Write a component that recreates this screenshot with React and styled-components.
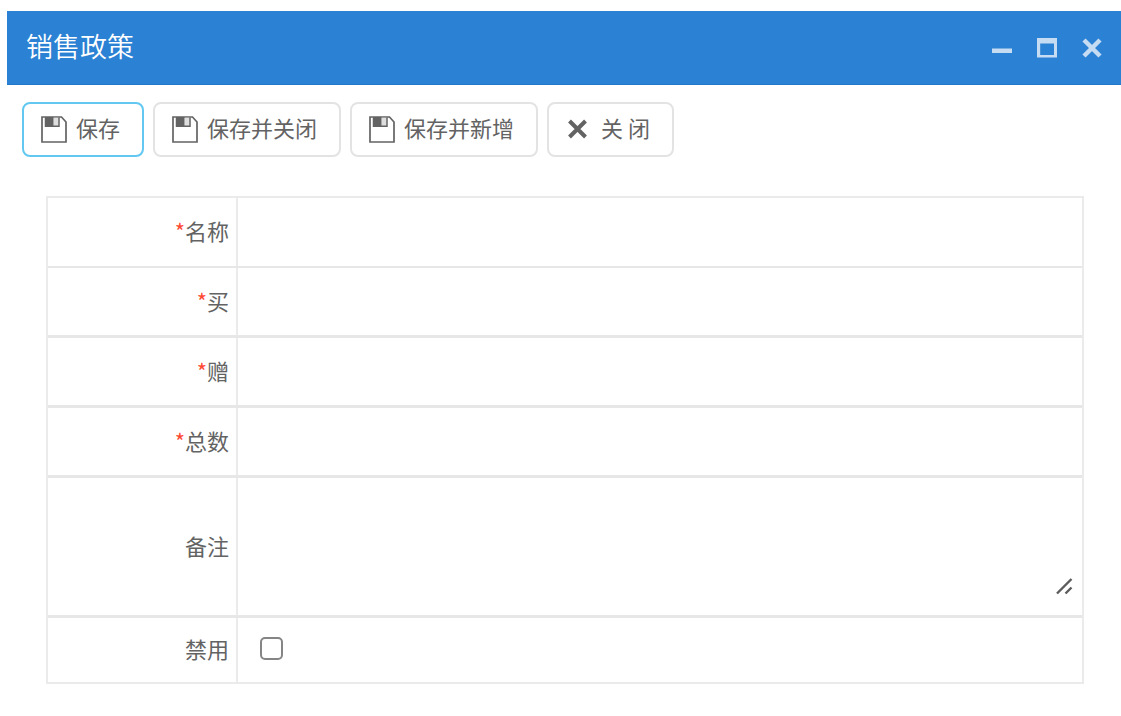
import React from "react";
import styled, { createGlobalStyle } from "styled-components";

const GlobalStyle = createGlobalStyle`
  * { box-sizing: border-box; }
  body {
    margin: 0;
    background: #fff;
    color: #636363;
    font-family: "Noto Sans CJK SC", sans-serif;
    font-size: 22px;
    line-height: 32px;
  }
`;

const Window = styled.main`
  margin: 11px 0 32px 7px;
`;

const TitleBar = styled.header`
  display: flex;
  align-items: center;
  justify-content: space-between;
  min-height: 74px;
  padding: 0 19px;
  background: #2b81d3;
  border-bottom: 1px solid #2478ca;
`;

const Title = styled.h1`
  margin: 0;
  padding-bottom: 4px;
  color: #fff;
  font-size: 27px;
  font-weight: 350;
  line-height: 40px;
`;

const WindowControls = styled.div`
  display: flex;
  gap: 25px;
`;

const ControlButton = styled.button`
  display: flex;
  width: 20px;
  height: 20px;
  padding: 0;
  border: 0;
  background: none;
  color: #c6dcf3;
  cursor: pointer;
`;

const Toolbar = styled.div`
  display: flex;
  flex-wrap: wrap;
  gap: 9px;
  padding: 17px 15px 0;
`;

const ToolButton = styled.button`
  display: flex;
  align-items: center;
  gap: 9px;
  height: 55px;
  padding: 0 22px 0 17px;
  border: 2px solid ${(p) => (p.$active ? "#63c8f1" : "#e3e3e3")};
  border-radius: 8px;
  background: #fff;
  color: inherit;
  font: inherit;
  cursor: pointer;
`;

const ButtonText = styled.span`
  padding-bottom: 5px;
`;

const Form = styled.form`
  margin: 39px 37px 0 39px;
  border: 2px solid #ebebeb;
`;

const Row = styled.div`
  display: grid;
  grid-template-columns: 190px 1fr;
  min-height: ${(p) => (p.$tall ? 140 : 70)}px;
  border-bottom: ${(p) => (p.$thin ? 2 : 3)}px solid #e7e7e7;

  &:last-child {
    min-height: 64px;
    border-bottom: 0;
  }
`;

const Label = styled.label`
  display: flex;
  align-items: center;
  justify-content: flex-end;
  padding: 0 7px 4px 0;
  border-right: 2px solid #ebebeb;
`;

const Required = styled.span`
  color: #ff4b33;
`;

const Field = styled.div`
  position: relative;
  display: flex;
  align-items: center;
  padding: 0 22px 4px;
`;

const TextInput = styled.input`
  width: 100%;
  border: 0;
  outline: 0;
  background: none;
  color: inherit;
  font: inherit;
`;

const TextArea = styled.textarea`
  align-self: stretch;
  width: 100%;
  margin: 16px 0;
  border: 0;
  outline: 0;
  resize: none;
  background: none;
  color: inherit;
  font: inherit;
`;

const ResizeGrip = styled.svg`
  position: absolute;
  right: 9px;
  bottom: 20px;
`;

const Checkbox = styled.input`
  appearance: none;
  width: 23px;
  height: 23px;
  margin: 0;
  border: 2px solid #858585;
  border-radius: 5px;
  background: #fff;

  &:checked {
    background: #2b81d3;
  }
`;

const SaveIcon = () => (
  <svg width="26" height="27" viewBox="0 0 26 27" fill="none" stroke="currentColor" aria-hidden="true">
    <path d="M1 1H20.5L25 6V26H1Z" strokeWidth="1.7" />
    <path d="M12.5 1.8H17.5V10H12.5Z" fill="#dedede" stroke="none" />
    <path d="M4.5 1.5V10.3H18V1.5" strokeWidth="1.5" />
    <path d="M4 1H12.5V11H4Z" fill="currentColor" stroke="none" />
  </svg>
);

const CloseIcon = () => (
  <svg width="26" height="27" viewBox="0 0 26 27" fill="none" stroke="currentColor" aria-hidden="true">
    <path d="M3.5 5L19.5 21M19.5 5L3.5 21" strokeWidth="4" />
  </svg>
);

const saveActions = [
  { text: "保存", active: true },
  { text: "保存并关闭" },
  { text: "保存并新增" },
];

const textFields = [
  { id: "name", label: "名称", thin: true },
  { id: "buy", label: "买" },
  { id: "gift", label: "赠" },
  { id: "total", label: "总数" },
];

export default function App() {
  return (
    <>
      <GlobalStyle />
      <Window>
        <TitleBar>
          <Title>销售政策</Title>
          <WindowControls>
            <ControlButton type="button" aria-label="最小化">
              <svg width="20" height="20" viewBox="0 0 20 20">
                <path d="M0 10.5H20V15H0Z" fill="currentColor" />
              </svg>
            </ControlButton>
            <ControlButton type="button" aria-label="最大化">
              <svg width="20" height="20" viewBox="0 0 20 20">
                <path d="M0 0H20V19.5H0ZM3.2 5.5V17H17V5.5Z" fill="currentColor" fillRule="evenodd" />
              </svg>
            </ControlButton>
            <ControlButton type="button" aria-label="关闭">
              <svg width="20" height="20" viewBox="0 0 20 20">
                <path d="M2 2L18 18M18 2L2 18" stroke="currentColor" strokeWidth="4.5" />
              </svg>
            </ControlButton>
          </WindowControls>
        </TitleBar>

        <Toolbar>
          {saveActions.map((a) => (
            <ToolButton key={a.text} type="button" $active={a.active}>
              <SaveIcon />
              <ButtonText>{a.text}</ButtonText>
            </ToolButton>
          ))}
          <ToolButton type="button">
            <CloseIcon />
            <ButtonText>关 闭</ButtonText>
          </ToolButton>
        </Toolbar>

        <Form>
          {textFields.map((f) => (
            <Row key={f.id} $thin={f.thin}>
              <Label htmlFor={f.id}>
                <Required>*</Required>
                {f.label}
              </Label>
              <Field>
                <TextInput id={f.id} type="text" required />
              </Field>
            </Row>
          ))}
          <Row $tall>
            <Label htmlFor="remark">备注</Label>
            <Field>
              <TextArea id="remark" />
              <ResizeGrip width="18" height="18" viewBox="0 0 18 18" stroke="#5c5c5c" strokeWidth="2.4" aria-hidden="true">
                <path d="M2 16.5L16.5 2M10.5 16.5L16.5 10.5" />
              </ResizeGrip>
            </Field>
          </Row>
          <Row>
            <Label htmlFor="disabled">禁用</Label>
            <Field>
              <Checkbox id="disabled" type="checkbox" />
            </Field>
          </Row>
        </Form>
      </Window>
    </>
  );
}
